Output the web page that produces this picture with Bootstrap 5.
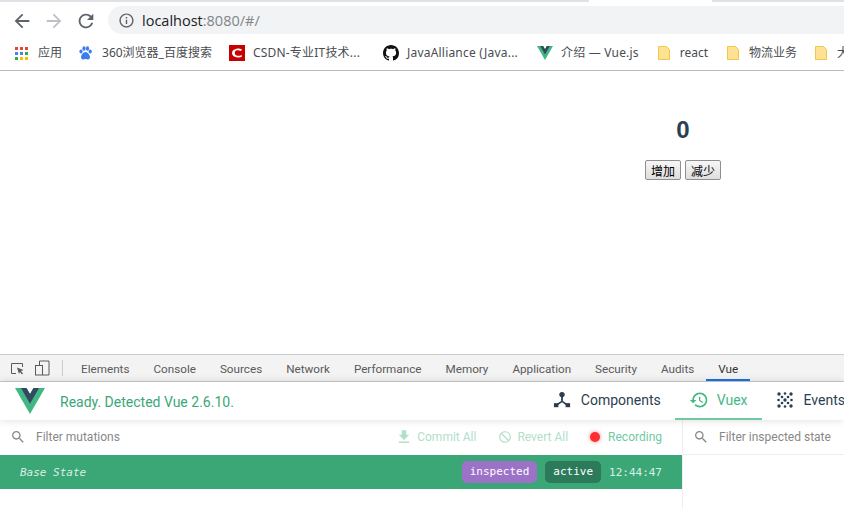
<!DOCTYPE html>
<html lang="en">
<head>
  <meta charset="UTF-8">
  <meta name="viewport" content="width=device-width, initial-scale=1">
  <title>localhost:8080</title>
  <link href="https://cdn.jsdelivr.net/npm/bootstrap@5.3.0/dist/css/bootstrap.min.css" rel="stylesheet">
  <style>
    html, body { height: 509px; overflow: hidden; }
    body { font-family: "Liberation Sans", "Noto Sans CJK SC", sans-serif; background: #fff; }
    .tab-strip { height: 2px; background: #dee1e6; }
    .tab-current { width: 123px; margin-left: 589px; background: #fff; height: 2px; }
    .tool-row { height: 34px; padding-top: 4px; }
    .nav-arrows { width: 108px; padding-left: 11px; gap: 10px; }
    .addr-box { height: 28px; background: #f1f3f4; border-radius: 14px 0 0 14px; padding-left: 10px; font: 14.5px "Open Sans", sans-serif; color: #80868b; gap: 7px; }
    .addr-host { color: #202124; }
    .mark-row { height: 35px; border-bottom: 1px solid #b9b9b9; padding-left: 15px; font-size: 12px; color: #494c50; white-space: nowrap; overflow: hidden; font-family: "Noto Sans", "Noto Sans CJK SC", sans-serif; }
    .mark-item { gap: 10px; margin-right: 17px; }
    .mark-tight { gap: 8px; }
    .mark-gap-18 { margin-right: 18px; }
    .mark-gap-19 { margin-right: 19px; }
    .mark-gap-23 { margin-right: 23px; }
    .mark-latin { letter-spacing: .2px; }
    .page-area { height: 283px; padding-top: 43px; padding-left: 522px; }
    .app-box { width: 322px; text-align: center; color: #2c3e50; }
    .count-num { font-size: 24px; font-weight: 700; line-height: 32px; margin-bottom: 14px; }
    .cn-btn { width: 36px; height: 20px; padding: 0; border: 1px solid #8f8f8f; border-radius: 2px; background: linear-gradient(#f6f6f6, #dedede); font: 12px "Noto Sans CJK SC", sans-serif; color: #000; line-height: 17px; }
    .dev-tabs { height: 28px; background: #f3f3f3; border-top: 1px solid #ccc; border-bottom: 1px solid #ccc; font-family: Roboto, sans-serif; font-size: 11.7px; color: #5a5a5a; }
    .dev-tools { width: 69px; padding-left: 10px; gap: 10px; }
    .dev-sep { width: 1px; height: 16px; background: #ccc; margin-left: 2px; }
    .dev-tab { height: 26px; line-height: 28px; padding: 0 12px; }
    .dev-tab-on { border-bottom: 2px solid #1a73e8; color: #333; }
    .vue-head { height: 38px; padding-left: 15px; font-family: Roboto, sans-serif; box-shadow: 0 0 8px rgba(0,0,0,.15); position: relative; white-space: nowrap; overflow: hidden; }
    .vue-ready { color: #3ba776; font-size: 14px; margin: 2px 0 0 15px; }
    .vue-tabs { margin-right: -15px; }
    .vue-btn { height: 38px; padding: 0 14px; gap: 10px; font-size: 14px; color: #2c3e50; border-bottom: 2px solid transparent; }
    .vue-btn-on { color: #42b983; border-bottom-color: #6fcaa2; gap: 8px; }
    .vue-events { gap: 11px; padding-left: 15px; }
    .vue-panes { height: 89px; font-family: Roboto, sans-serif; font-size: 12px; }
    .left-pane { width: 683px; border-right: 1px solid #eee; }
    .filter-row { height: 35px; padding: 0 20px 0 10px; color: #888; border-bottom: 1px solid transparent; }
    .filter-text { margin-left: 10px; }
    .act-group { gap: 22px; }
    .act-link { color: #b0e0c9; gap: 4px; }
    .act-revert { gap: 5px; }
    .rec-dot { width: 10px; height: 10px; border-radius: 50%; background: #ff2d2d; box-shadow: 0 0 4px #ff8a8a; }
    .rec-label { color: #6fcaa2; }
    .base-row { height: 34px; background: #3ba776; padding: 0 20px; color: #fff; font: 11px "DejaVu Sans Mono", monospace; }
    .base-name { font-style: italic; color: #d9f0e5; }
    .tag-inspected { background: #9c72c8; }
    .tag-active { background: #2b7a5a; }
    .tag-pill { height: 22px; line-height: 22px; padding: 0 8px; border-radius: 5px; }
    .base-time { color: #d9f0e5; margin-left: 8px; }
    .right-filter { height: 35px; padding-left: 10px; color: #888; border-bottom: 1px solid #eee; }
  </style>
</head>
<body>
  <!-- Browser chrome -->
  <div class="tab-strip"><div class="tab-current"></div></div>
  <div class="tool-row d-flex">
    <div class="nav-arrows d-flex align-items-center">
      <svg width="22" height="22" viewBox="0 0 24 24" fill="#5f6368"><path d="M20 11H7.830l5.590-5.590L12 4l-8 8 8 8 1.410-1.410L7.830 13H20v-2z"/></svg>
      <svg width="22" height="22" viewBox="0 0 24 24" fill="#bdc1c6"><path d="M12 4l-1.410 1.410L16.170 11H4v2h12.170l-5.580 5.590L12 20l8-8z"/></svg>
      <svg width="22" height="22" viewBox="0 0 24 24" fill="#5f6368"><path d="M17.650 6.350C16.200 4.900 14.210 4 12 4c-4.420 0-7.990 3.580-7.990 8s3.570 8 7.990 8c3.730 0 6.840-2.550 7.730-6h-2.080c-.82 2.330-3.040 4-5.650 4-3.310 0-6-2.690-6-6s2.690-6 6-6c1.660 0 3.140.69 4.220 1.780L13 11h7V4l-2.350 2.350z"/></svg>
    </div>
    <div class="addr-box flex-grow-1 d-flex align-items-center">
      <svg width="17" height="17" viewBox="0 0 24 24" fill="#5f6368"><path d="M11 7h2v2h-2zm0 4h2v6h-2zm1-9C6.480 2 2 6.480 2 12s4.480 10 10 10 10-4.480 10-10S17.520 2 12 2zm0 18c-4.410 0-8-3.590-8-8s3.590-8 8-8 8 3.590 8 8-3.590 8-8 8z"/></svg>
      <span><span class="addr-host">localhost</span>:8080/#/</span>
    </div>
  </div>
  <div class="mark-row d-flex align-items-center">
    <div class="mark-item d-flex align-items-center">
      <svg width="13" height="13" viewBox="0 0 13 13"><g fill="#ea4335"><rect width="3" height="3"/><rect x="5" width="3" height="3"/><rect x="10" width="3" height="3"/></g><g fill="#4285f4"><rect y="5" width="3" height="3"/><rect x="5" y="5" width="3" height="3"/></g><rect x="10" y="5" width="3" height="3" fill="#34a853"/><g fill="#34a853"><rect y="10" width="3" height="3"/></g><g fill="#fbbc05"><rect x="5" y="10" width="3" height="3"/><rect x="10" y="10" width="3" height="3"/></g></svg>
      <span>应用</span>
    </div>
    <div class="mark-item d-flex align-items-center">
      <svg width="13" height="14" viewBox="0 0 13 14" fill="#3b7cf0"><ellipse cx="2" cy="5.500" rx="1.600" ry="2"/><ellipse cx="5" cy="2.500" rx="1.600" ry="2.200"/><ellipse cx="8.500" cy="2.500" rx="1.600" ry="2.200"/><ellipse cx="11.200" cy="5.500" rx="1.600" ry="2"/><path d="M6.500 6C4.500 6 2 9 2 11s1.500 2.500 2.500 2.500 1.200-.4 2-.4 1 .4 2 .4 2.500-.5 2.500-2.500S8.500 6 6.500 6z"/></svg>
      <span>360浏览器_百度搜索</span>
    </div>
    <div class="mark-item mark-tight mark-gap-23 d-flex align-items-center">
      <svg width="16" height="16" viewBox="0 0 16 16"><rect width="16" height="16" fill="#c90000"/><path d="M13 4.500C11.500 3.500 9.500 3.300 7.500 3.700 4.500 4.300 3 6 3 8s1.500 3.700 4.500 4.300c2 .4 4 .2 5.500-.8l-.5-1.500c-1.500.8-3 1-4.300.7C6.500 10.300 5.800 9.200 5.800 8s.7-2.300 1.900-2.700c1.300-.3 2.800-.1 4.300.7z" fill="#fff"/></svg>
      <span class="mark-latin">CSDN-专业IT技术...</span>
    </div>
    <div class="mark-item mark-tight mark-gap-19 d-flex align-items-center">
      <svg width="16" height="16" viewBox="0 0 16 16" fill="#111"><path d="M8 0C3.580 0 0 3.580 0 8c0 3.540 2.290 6.530 5.470 7.590.4.070.55-.17.55-.38 0-.19-.01-.82-.01-1.490-2.010.37-2.530-.49-2.690-.94-.09-.23-.48-.94-.82-1.130-.28-.15-.68-.52-.01-.53.63-.01 1.080.58 1.230.82.72 1.210 1.870.87 2.330.66.070-.52.28-.87.51-1.070-1.780-.2-3.640-.89-3.640-3.950 0-.87.31-1.590.82-2.150-.08-.2-.36-1.020.08-2.120 0 0 .67-.21 2.200.82.64-.18 1.320-.27 2-.27.68 0 1.360.09 2 .27 1.530-1.040 2.200-.82 2.200-.82.44 1.100.16 1.920.08 2.120.51.56.82 1.270.82 2.150 0 3.070-1.870 3.750-3.650 3.950.29.25.54.73.54 1.480 0 1.070-.01 1.930-.01 2.200 0 .21.15.46.55.38A8.013 8.013 0 0016 8c0-4.420-3.580-8-8-8z"/></svg>
      <span class="mark-latin">JavaAlliance (Java...</span>
    </div>
    <div class="mark-item mark-tight mark-gap-19 d-flex align-items-center">
      <svg width="16" height="14" viewBox="0 0 261 226"><path d="M161 0l-30.500 53L100 0H0l130.500 226L261 0z" fill="#41b883"/><path d="M161 0l-30.500 53L100 0H52l78.500 136L209 0z" fill="#35495e"/></svg>
      <span class="mark-latin">介绍 — Vue.js</span>
    </div>
    <div class="mark-item mark-gap-19 d-flex align-items-center">
      <svg width="12" height="14" viewBox="0 0 12 14"><path d="M.5.5h8l3 3v10H.5z" fill="#fde293" stroke="#f0c94b"/></svg>
      <span>react</span>
    </div>
    <div class="mark-item mark-gap-18 d-flex align-items-center">
      <svg width="12" height="14" viewBox="0 0 12 14"><path d="M.5.5h8l3 3v10H.5z" fill="#fde293" stroke="#f0c94b"/></svg>
      <span>物流业务</span>
    </div>
    <div class="mark-item d-flex align-items-center">
      <svg width="12" height="14" viewBox="0 0 12 14"><path d="M.5.5h8l3 3v10H.5z" fill="#fde293" stroke="#f0c94b"/></svg>
      <span>大</span>
    </div>
  </div>

  <!-- Counter page -->
  <div class="page-area">
    <div class="app-box">
      <div class="count-num">0</div>
      <div class="d-flex justify-content-center gap-1">
        <button class="cn-btn">增加</button>
        <button class="cn-btn">减少</button>
      </div>
    </div>
  </div>

  <!-- Devtools tabs -->
  <div class="dev-tabs d-flex align-items-center">
    <div class="dev-tools d-flex align-items-center">
      <svg width="15" height="15" viewBox="0 0 15 15" fill="none" stroke="#5a5a5a"><path d="M6 12.500H1.500v-10h11V6"/><path d="M7 6.500l6.500 2.500-2.500 1 2 2.500-1 1-2-2.500-1 2z" fill="#5a5a5a" stroke="none"/></svg>
      <svg width="15" height="16" viewBox="0 0 15 16" fill="none" stroke="#5a5a5a"><path d="M4.500 5V1h9.500v14H8"/><rect x=".5" y="5.500" width="7" height="9.500"/></svg>
      <div class="dev-sep"></div>
    </div>
    <div class="dev-tab">Elements</div>
    <div class="dev-tab">Console</div>
    <div class="dev-tab">Sources</div>
    <div class="dev-tab">Network</div>
    <div class="dev-tab">Performance</div>
    <div class="dev-tab">Memory</div>
    <div class="dev-tab">Application</div>
    <div class="dev-tab">Security</div>
    <div class="dev-tab">Audits</div>
    <div class="dev-tab dev-tab-on">Vue</div>
  </div>

  <!-- Vue devtools header -->
  <div class="vue-head d-flex align-items-center">
    <svg width="30" height="26" viewBox="0 0 261 226"><path d="M161 0l-30.500 53L100 0H0l130.500 226L261 0z" fill="#41b883"/><path d="M161 0l-30.500 53L100 0H52l78.500 136L209 0z" fill="#35495e"/></svg>
    <span class="vue-ready">Ready. Detected Vue 2.6.10.</span>
    <div class="vue-tabs d-flex align-items-center ms-auto">
      <div class="vue-btn d-flex align-items-center">
        <svg width="18" height="18" viewBox="0 0 20 20" fill="#2c3e50"><circle cx="10" cy="4" r="3"/><path d="M9 6h2v5l5 3.500-1 1.500-5-3.500L5 16l-1-1.500L9 11z"/><rect x="1" y="13.500" width="5" height="4.500"/><rect x="14" y="13.500" width="5" height="4.500"/></svg>
        <span>Components</span>
      </div>
      <div class="vue-btn vue-btn-on d-flex align-items-center">
        <svg width="20" height="20" viewBox="0 0 24 24" fill="#42b983"><path d="M13 3c-4.970 0-9 4.030-9 9H1l3.890 3.890.07.14L9 12H6c0-3.870 3.130-7 7-7s7 3.130 7 7-3.130 7-7 7c-1.930 0-3.680-.79-4.940-2.060l-1.420 1.420C8.270 19.990 10.510 21 13 21c4.970 0 9-4.030 9-9s-4.030-9-9-9zm-1 5v5l4.280 2.540.72-1.210-3.500-2.080V8H12z"/></svg>
        <span>Vuex</span>
      </div>
      <div class="vue-btn vue-events d-flex align-items-center">
        <svg width="16" height="16" viewBox="0 0 16 16" fill="#2c3e50"><circle cx="2" cy="2" r="1.700"/><circle cx="8" cy="1.500" r="1.300"/><circle cx="14" cy="2" r="1.700"/><circle cx="5" cy="5" r="1.300"/><circle cx="11" cy="5" r="1.300"/><circle cx="1.500" cy="8" r="1.300"/><circle cx="8" cy="8" r="1.700"/><circle cx="14.500" cy="8" r="1.300"/><circle cx="5" cy="11" r="1.300"/><circle cx="11" cy="11" r="1.300"/><circle cx="2" cy="14" r="1.700"/><circle cx="8" cy="14.500" r="1.300"/><circle cx="14" cy="14" r="1.700"/></svg>
        <span>Events</span>
      </div>
    </div>
  </div>

  <!-- Vuex panes -->
  <div class="vue-panes d-flex">
    <div class="left-pane">
      <div class="filter-row d-flex align-items-center">
        <svg width="16" height="16" viewBox="0 0 24 24" fill="#888"><path d="M15.500 14h-.79l-.28-.27C15.410 12.590 16 11.110 16 9.500 16 5.910 13.090 3 9.500 3S3 5.910 3 9.500 5.910 16 9.500 16c1.610 0 3.090-.59 4.230-1.570l.27.28v.79l5 4.990L20.490 19l-4.990-5zm-6 0C7.010 14 5 11.990 5 9.500S7.010 5 9.500 5 14 7.010 14 9.500 11.990 14 9.500 14z"/></svg>
        <span class="filter-text">Filter mutations</span>
        <div class="act-group d-flex align-items-center ms-auto">
          <span class="act-link d-flex align-items-center">
            <svg width="18" height="18" viewBox="0 0 24 24" fill="#b0e0c9"><path d="M19 9h-4V3H9v6H5l7 7 7-7zM5 18v2h14v-2H5z"/></svg>Commit All
          </span>
          <span class="act-link act-revert d-flex align-items-center">
            <svg width="14" height="14" viewBox="0 0 24 24" fill="#b0e0c9"><path d="M12 2C6.480 2 2 6.480 2 12s4.480 10 10 10 10-4.480 10-10S17.520 2 12 2zm0 18c-4.420 0-8-3.580-8-8 0-1.850.63-3.550 1.690-4.900L16.900 18.310C15.550 19.370 13.850 20 12 20zm6.310-3.100L7.100 5.690C8.450 4.630 10.150 4 12 4c4.420 0 8 3.580 8 8 0 1.850-.63 3.550-1.690 4.900z"/></svg>Revert All
          </span>
          <span class="d-flex align-items-center">
            <span class="rec-dot me-2"></span><span class="rec-label">Recording</span>
          </span>
        </div>
      </div>
      <div class="base-row d-flex align-items-center">
        <span class="base-name">Base State</span>
        <span class="tag-pill tag-inspected ms-auto me-2">inspected</span>
        <span class="tag-pill tag-active">active</span>
        <span class="base-time">12:44:47</span>
      </div>
    </div>
    <div class="flex-grow-1">
      <div class="right-filter d-flex align-items-center">
        <svg width="16" height="16" viewBox="0 0 24 24" fill="#888"><path d="M15.500 14h-.79l-.28-.27C15.410 12.590 16 11.110 16 9.500 16 5.910 13.090 3 9.500 3S3 5.910 3 9.500 5.910 16 9.500 16c1.610 0 3.090-.59 4.230-1.570l.27.28v.79l5 4.990L20.490 19l-4.990-5zm-6 0C7.010 14 5 11.990 5 9.500S7.010 5 9.500 5 14 7.010 14 9.500 11.990 14 9.500 14z"/></svg>
        <span class="filter-text">Filter inspected state</span>
      </div>
    </div>
  </div>

  <script src="https://cdn.jsdelivr.net/npm/bootstrap@5.3.0/dist/js/bootstrap.bundle.min.js"></script>
</body>
</html>
